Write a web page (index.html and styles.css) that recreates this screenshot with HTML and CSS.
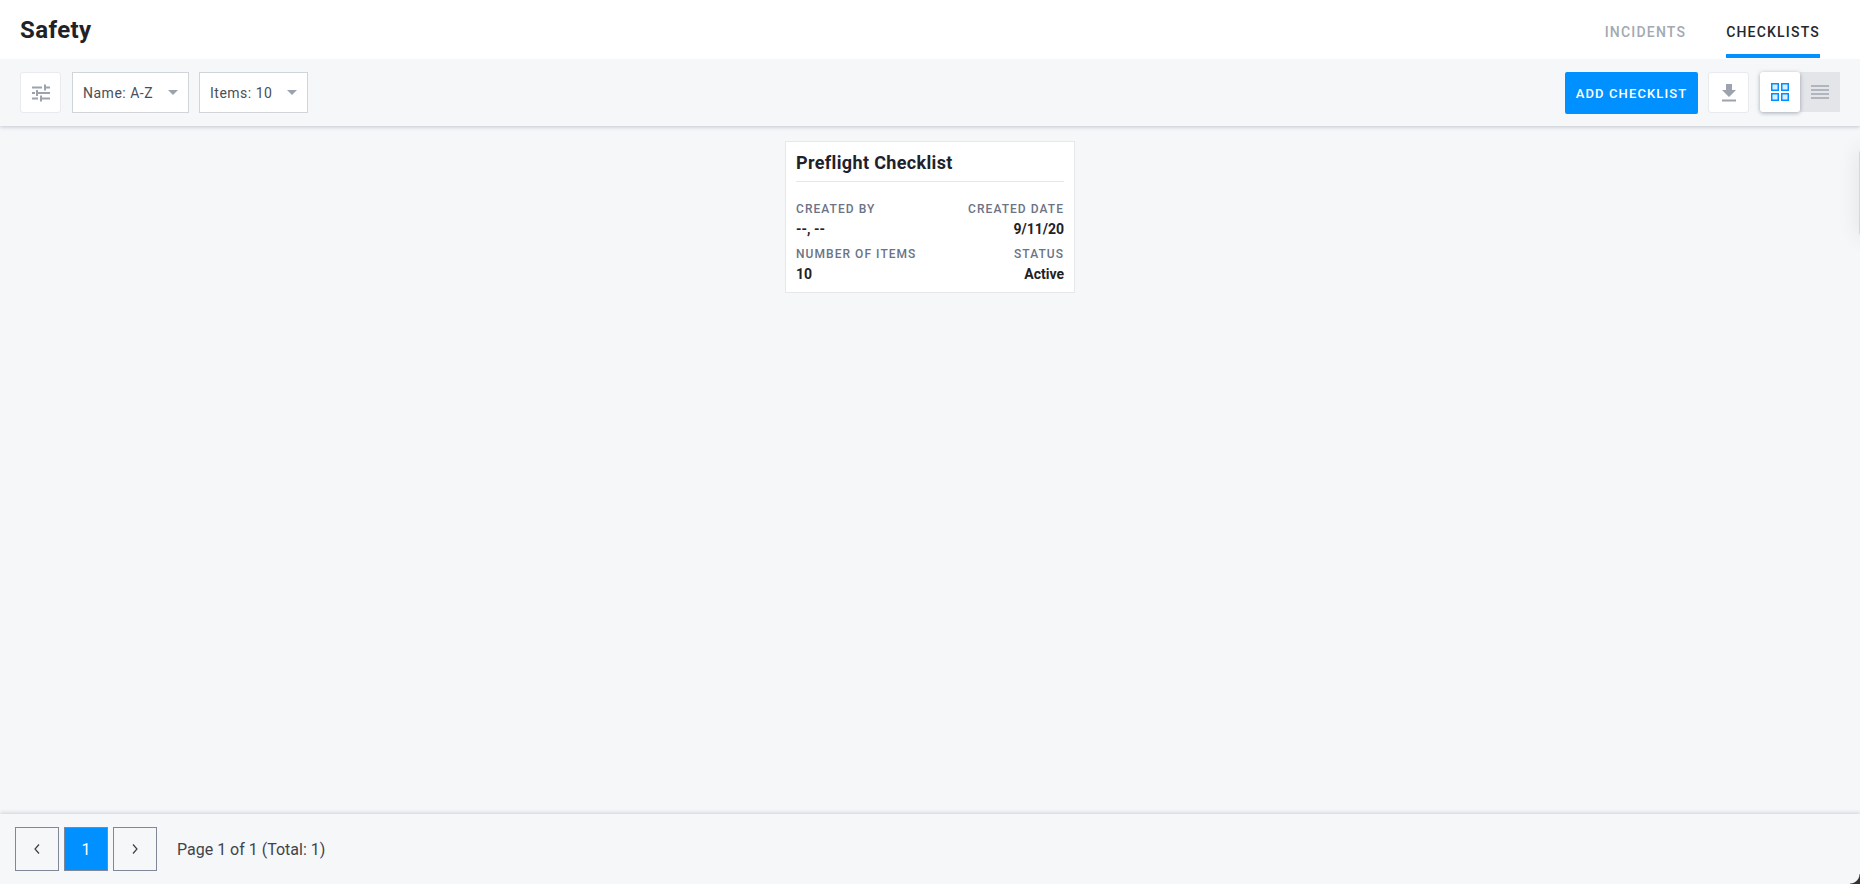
FILE: index.html
```html
<!DOCTYPE html>
<html lang="en">
<head>
<meta charset="utf-8">
<title>Safety</title>
<link rel="stylesheet" href="styles.css">
</head>
<body>
<div class="app">
  <header class="top">
    <h1 class="title">Safety</h1>
    <nav class="tabs">
      <a class="tab">INCIDENTS</a>
      <a class="tab active">CHECKLISTS</a>
    </nav>
  </header>
  <div class="toolbar">
    <div class="group">
      <button class="icon-btn filter">
        <svg width="18" height="18" viewBox="0 0 18 18" fill="#9ca3af"><path d="M0 2.500h10v2H0zM12 .5h2v6h-2zM14 2.500h4v2h-4zM0 8h3v2H0zM4 6h2v6H4zM6 8h12v2H6zM0 13.500h6v2H0zM8 11.500h2v6H8zM10 13.500h8v2h-8z"/></svg>
      </button>
      <div class="select name-sel"><span>Name: A-Z</span><i class="caret"></i></div>
      <div class="select items-sel"><span>Items: 10</span><i class="caret"></i></div>
    </div>
    <div class="group">
      <button class="add">ADD CHECKLIST</button>
      <button class="icon-btn dl">
        <svg width="14" height="18" viewBox="0 0 14 18" fill="#9ca3af"><path d="M4 0h6v6h4l-7 7-7-7h4zM0 15.500h14v2H0z"/></svg>
      </button>
      <div class="views">
        <button class="view on">
          <svg width="18" height="18" viewBox="0 0 18 18" fill="#dbeeff" stroke="#0090ff" stroke-width="1.500"><rect x=".75" y=".75" width="6.500" height="6.500"/><rect x="10.750" y=".75" width="6.500" height="6.500"/><rect x=".75" y="10.750" width="6.500" height="6.500"/><rect x="10.750" y="10.750" width="6.500" height="6.500"/></svg>
        </button>
        <button class="view off">
          <svg width="18" height="14" viewBox="0 0 18 14" fill="#b0b5c0"><path d="M0 0h18v2H0zM0 4h18v2H0zM0 8h18v2H0zM0 12h18v2H0z"/></svg>
        </button>
      </div>
    </div>
  </div>
  <main class="content">
    <article class="card">
      <h2 class="card-title">Preflight Checklist</h2>
      <div class="fields">
        <div class="field"><span class="label">CREATED BY</span><span class="value">--, --</span></div>
        <div class="field right"><span class="label">CREATED DATE</span><span class="value">9/11/20</span></div>
        <div class="field"><span class="label">NUMBER OF ITEMS</span><span class="value">10</span></div>
        <div class="field right"><span class="label">STATUS</span><span class="value">Active</span></div>
      </div>
    </article>
    <div class="edge"></div>
  </main>
  <footer class="pager">
    <button class="page"><svg width="6" height="10" viewBox="0 0 6 10" fill="none" stroke="#3a3f47" stroke-width="1.200"><path d="M5 .5 1 5l4 4.500"/></svg></button>
    <button class="page current">1</button>
    <button class="page"><svg width="6" height="10" viewBox="0 0 6 10" fill="none" stroke="#3a3f47" stroke-width="1.200"><path d="M1 .5 5 5 1 9.500"/></svg></button>
    <span class="summary">Page 1 of 1 (Total: 1)</span>
  </footer>
  <div class="corner"></div>
</div>
</body>
</html>
```
FILE: styles.css
```css
* { box-sizing: border-box; }
html, body { margin: 0; height: 100%; overflow: hidden; }
body { font-family: Roboto, "Liberation Sans", sans-serif; background: #f6f7f9; color: #1f2226; }
.app { height: 884px; display: flex; flex-direction: column; position: relative; overflow: hidden; }
button { font-family: inherit; cursor: pointer; padding: 0; }

.top { height: 59px; flex: none; background: #fff; display: flex; justify-content: space-between; padding: 0 40px 0 20px; position: relative; z-index: 3; }
.title { margin: 0; font-size: 24px; line-height: 61px; font-weight: 700; letter-spacing: .4px; color: #1f2329; }
.tabs { display: flex; gap: 40px; }
.tab { height: 59px; padding-top: 23px; font-size: 14px; line-height: 18px; font-weight: 500; letter-spacing: 1.200px; color: #a2a9b4; }
.tab.active { color: #24272c; border-bottom: 4px solid #0090ff; height: 58px; }

.toolbar { height: 67px; flex: none; background: #f6f7f9; display: flex; justify-content: space-between; align-items: flex-start; padding: 13px 20px 0; box-shadow: 0 1px 4px rgba(60, 70, 90, .28); position: relative; z-index: 2; }
.group { display: flex; }
.icon-btn { width: 41px; height: 41px; background: #fff; border: 1px solid #e8eaee; border-radius: 3px; display: flex; align-items: center; justify-content: center; }
.filter { margin-right: 11px; }
.select { height: 41px; background: #fff; border: 1px solid #d1d5da; margin-right: 10px; display: flex; align-items: center; justify-content: space-between; font-size: 14px; letter-spacing: .5px; color: #4a4f57; padding: 0 10px; }
.name-sel { width: 117px; }
.items-sel { width: 109px; margin-right: 0; }
.caret { width: 0; height: 0; border-left: 5px solid transparent; border-right: 5px solid transparent; border-top: 5px solid #9ca3af; }
.add { width: 133px; height: 42px; background: #0090ff; color: #fff; border: 0; border-radius: 2px; font-size: 13px; font-weight: 500; letter-spacing: 1.100px; margin-right: 10px; }
.dl { margin-right: 11px; }
.views { display: flex; }
.view { width: 40px; height: 40px; border: 0; display: flex; align-items: center; justify-content: center; }
.view.on { background: #fff; border-radius: 3px; box-shadow: 0 1px 4px rgba(60, 70, 90, .45); position: relative; z-index: 1; }
.view.off { background: #e3e5e9; }

.content { flex: 1; position: relative; display: flex; justify-content: center; align-items: flex-start; padding-top: 15px; }
.card { width: 290px; height: 152px; background: #fff; border: 1px solid #e5e7eb; padding: 0 10px; }
.card-title { margin: 0; height: 40px; font-size: 18px; line-height: 41px; font-weight: 700; letter-spacing: .35px; color: #1f2329; border-bottom: 1px solid #e5e7eb; }
.fields { display: grid; grid-template-columns: 1fr 1fr; row-gap: 9px; padding-top: 20px; }
.field { display: flex; flex-direction: column; gap: 5px; }
.field.right { text-align: right; }
.label { font-size: 12px; line-height: 14px; font-weight: 500; letter-spacing: 1.050px; color: #6b7385; white-space: nowrap; }
.value { font-size: 14px; line-height: 17px; font-weight: 700; color: #1f2226; }
.edge { position: absolute; right: -14px; top: 22px; width: 15px; height: 90px; border-radius: 6px; background: #d5d7db; box-shadow: 0 0 22px rgba(0, 0, 0, .10); }

.pager { height: 70px; flex: none; background: #f6f7f9; box-shadow: 0 -1px 4px rgba(60, 70, 90, .22); display: flex; align-items: center; padding: 0 15px; gap: 5px; position: relative; }
.page { width: 44px; height: 44px; background: transparent; border: 1px solid #808898; display: flex; align-items: center; justify-content: center; font-size: 16px; color: #fff; }
.page.current { background: #0090ff; }
.summary { margin-left: 15px; font-size: 16px; color: #3f444b; }
.corner { position: absolute; right: 0; bottom: 0; width: 10px; height: 10px; background: radial-gradient(circle at 0 0, transparent 9px, #333 10px); }
```
